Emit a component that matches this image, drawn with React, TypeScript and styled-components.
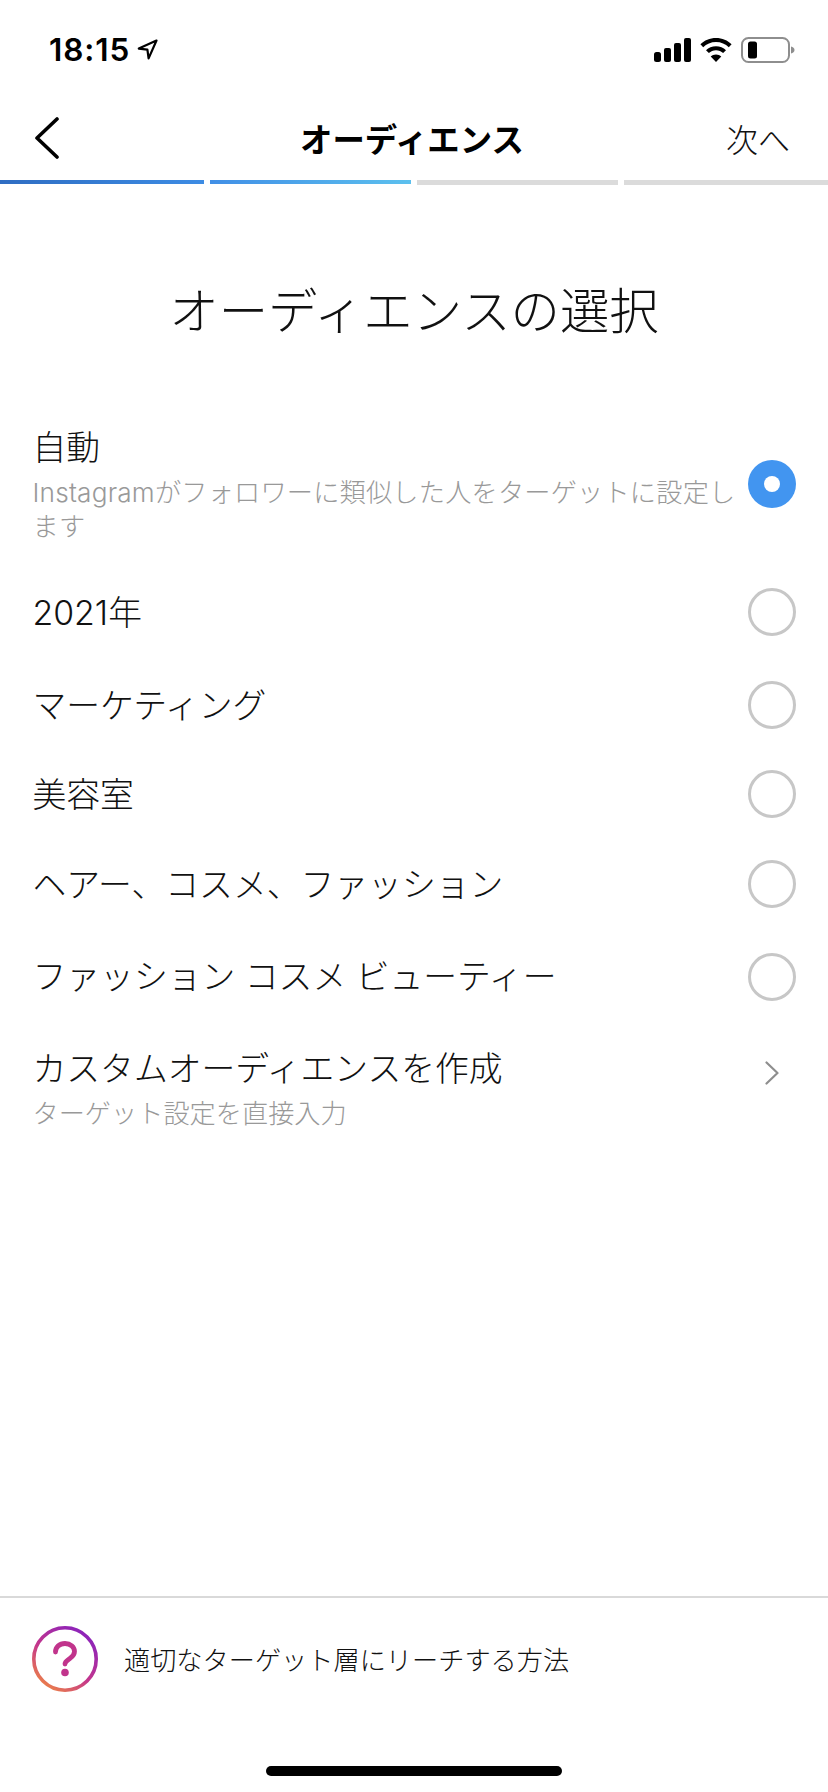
import React from "react";
import styled, { createGlobalStyle } from "styled-components";

const FONT = `"Noto Sans CJK JP", "Noto Sans", sans-serif`;
const MIXED = `Inter, "Noto Sans CJK JP", "Noto Sans", sans-serif`;

const Global = createGlobalStyle`
  html, body { margin: 0; padding: 0; background: #fff; }
  * { box-sizing: border-box; }
`;

const Page = styled.div`
  width: 828px;
  height: 1792px;
  display: flex;
  flex-direction: column;
  background: #fff;
  font-family: ${FONT};
  color: #111;
  overflow: hidden;
`;

const StatusBar = styled.div`
  height: 100px;
  padding: 32px 33px 0 49px;
  display: flex;
  justify-content: space-between;
  align-items: flex-start;
`;

const Time = styled.div`
  display: flex;
  align-items: center;
  gap: 7px;
  height: 35px;
  font-family: Inter, "Liberation Sans", sans-serif;
  font-weight: 600;
  font-size: 31.5px;
  letter-spacing: 0.9px;
  color: #000;
`;

const StatusIcons = styled.div`
  display: flex;
  align-items: center;
  gap: 9px;
  height: 35px;
`;

const Nav = styled.div`
  height: 80px;
  padding: 0 38px 4px 34px;
  display: grid;
  grid-template-columns: 1fr auto 1fr;
  align-items: center;
`;

const NavTitle = styled.div`
  font-size: 32.4px;
  font-weight: 700;
  line-height: 40px;
  color: #000;
`;

const NavNext = styled.div`
  justify-self: end;
  font-size: 32px;
  font-weight: 300;
  line-height: 40px;
  margin-bottom: 1px;
`;

const Progress = styled.div`
  display: grid;
  grid-template-columns: 204px 201px 201px 204px;
  column-gap: 6px;
  height: 5px;
`;

const Segment = styled.div<{ $from?: string; $to?: string }>`
  height: ${(p) => (p.$from ? "4px" : "5px")};
  background: ${(p) =>
    p.$from ? `linear-gradient(90deg, ${p.$from}, ${p.$to})` : "#dbdbdb"};
`;

const Title = styled.h1`
  margin: 0;
  height: 235px;
  padding-top: 93px;
  text-align: center;
  font-size: 49.4px;
  font-weight: 300;
  line-height: 60px;
  color: #111;
`;

const List = styled.div`
  display: flex;
  flex-direction: column;
  padding: 0 32px 0 33px;
`;

const Row = styled.div<{ $h: number; $after?: number }>`
  height: ${(p) => p.$h}px;
  margin-bottom: ${(p) => p.$after ?? 0}px;
  display: flex;
  align-items: center;
  justify-content: space-between;
  gap: 4px;
`;

const RowText = styled.div<{ $drop?: number }>`
  flex: 1;
  min-width: 0;
  padding-top: ${(p) => p.$drop ?? 0}px;
`;

const RowTitle = styled.div<{ $single?: boolean }>`
  font-family: ${MIXED};
  font-size: 33.8px;
  font-weight: 300;
  line-height: 46px;
  color: #111;
  padding-top: ${(p) => (p.$single ? "1px" : "0")};
  margin-left: -0.5px;
`;

const RowSub = styled.div<{ $track?: boolean }>`
  margin-top: 5px;
  font-family: ${MIXED};
  font-size: 26.2px;
  font-weight: 300;
  line-height: 34px;
  letter-spacing: ${(p) => (p.$track ? "0.2px" : "0")};
  color: #999;
  margin-left: -0.5px;
`;

const Radio = styled.div<{ $on?: boolean }>`
  flex: none;
  width: 48px;
  height: 48px;
  border-radius: 50%;
  display: flex;
  align-items: center;
  justify-content: center;
  background: ${(p) => (p.$on ? "#4295f0" : "#fff")};
  border: ${(p) => (p.$on ? "none" : "3px solid #c7c7c7")};
  &::after {
    content: "";
    display: ${(p) => (p.$on ? "block" : "none")};
    width: 16px;
    height: 16px;
    border-radius: 50%;
    background: #fff;
  }
`;

const Chevron = styled.svg`
  flex: none;
  margin: 0 17px 27px 0;
`;

const Footer = styled.div`
  margin-top: auto;
  height: 196px;
  border-top: 2px solid #d9d9d9;
  display: flex;
  flex-direction: column;
  align-items: center;
`;

const Help = styled.div`
  align-self: stretch;
  height: 124px;
  padding: 28px 0 0 32px;
  display: flex;
  align-items: flex-start;
  gap: 26px;
`;

const HelpText = styled.div`
  font-size: 26.2px;
  font-weight: 300;
  line-height: 66px;
  color: #111;
`;

const HomeBar = styled.div`
  margin-top: 44px;
  width: 296px;
  height: 10px;
  border-radius: 5px;
  background: #000;
`;

const rows = [
  { h: 92, t: "2021年" },
  { h: 94, t: "マーケティング" },
  { h: 84, t: "美容室" },
  { h: 96, t: "ヘアー、コスメ、ファッション" },
  { h: 89, t: "ファッション コスメ ビューティー" },
];

export default function App() {
  return (
    <Page>
      <Global />
      <StatusBar>
        <Time>
          18:15
          <svg width="21" height="21" viewBox="0 0 21 21" fill="none">
            <path
              d="M19.5 1.5 L1.8 9.6 L10.4 10.7 L11.6 19.4 Z"
              stroke="#000"
              strokeWidth="2.2"
              strokeLinejoin="round"
            />
          </svg>
        </Time>
        <StatusIcons>
          <svg width="37" height="24" viewBox="0 0 37 24" fill="#000">
            <rect x="0" y="14" width="7" height="10" rx="2.5" />
            <rect x="10" y="10" width="7" height="14" rx="2" />
            <rect x="20" y="5" width="7" height="19" rx="2" />
            <rect x="30" y="0" width="7" height="24" rx="2" />
          </svg>
          <svg width="32" height="24" viewBox="0 0 32 24" fill="#000">
            <path d="M16 0C9.8 0 4.3 2.4 0.4 6.3L3.2 9.2C6.5 6 11 4 16 4s9.5 2 12.8 5.2l2.8-2.9C27.7 2.4 22.2 0 16 0z" />
            <path d="M16 8.2c-3.9 0-7.5 1.5-10 4l2.9 2.9C10.7 13.3 13.2 12.2 16 12.2s5.3 1.1 7.1 2.9l2.9-2.9c-2.5-2.5-6.1-4-10-4z" />
            <path d="M16 16.4c-2.1 0-4 .8-5.3 2.2L16 24l5.3-5.4c-1.3-1.4-3.2-2.2-5.3-2.2z" />
          </svg>
          <svg width="54" height="26" viewBox="0 0 54 26" fill="none">
            <rect x="1" y="1" width="47" height="24" rx="6.5" stroke="#8e8e8e" strokeWidth="2" />
            <rect x="7" y="4.5" width="9" height="17" rx="2.5" fill="#000" />
            <path d="M50 9.5c2 .4 3.5 1.8 3.5 3.5s-1.5 3.1-3.5 3.5z" fill="#8e8e8e" />
          </svg>
        </StatusIcons>
      </StatusBar>
      <Nav>
        <svg width="26" height="42" viewBox="0 0 26 42" fill="none">
          <path
            d="M23 2 L3 21 L23 40"
            stroke="#000"
            strokeWidth="3.6"
            strokeLinecap="round"
            strokeLinejoin="round"
          />
        </svg>
        <NavTitle>オーディエンス</NavTitle>
        <NavNext>次へ</NavNext>
      </Nav>
      <Progress>
        <Segment $from="#2f6dc2" $to="#3d8ce4" />
        <Segment $from="#418fe6" $to="#5cc0ee" />
        <Segment />
        <Segment />
      </Progress>
      <Title>オーディエンスの選択</Title>
      <List>
        <Row $h={128} $after={18}>
          <RowText>
            <RowTitle>自動</RowTitle>
            <RowSub $track>Instagramがフォロワーに類似した人をターゲットに設定します</RowSub>
          </RowText>
          <Radio $on />
        </Row>
        {rows.map((r) => (
          <Row key={r.t} $h={r.h}>
            <RowTitle $single>{r.t}</RowTitle>
            <Radio />
          </Row>
        ))}
        <Row $h={131}>
          <RowText $drop={4}>
            <RowTitle>カスタムオーディエンスを作成</RowTitle>
            <RowSub>ターゲット設定を直接入力</RowSub>
          </RowText>
          <Chevron width="14" height="24" viewBox="0 0 14 24" fill="none">
            <path d="M1.5 1.5 L12.5 12 L1.5 22.5" stroke="#8e8e8e" strokeWidth="2.2" strokeLinecap="round" strokeLinejoin="round" />
          </Chevron>
        </Row>
      </List>
      <Footer>
        <Help>
          <svg width="66" height="66" viewBox="0 0 66 66" fill="none">
            <defs>
              <linearGradient id="ring" x1="0.8" y1="0.1" x2="0.2" y2="0.95">
                <stop offset="0" stopColor="#8f24b8" />
                <stop offset="0.55" stopColor="#c4368c" />
                <stop offset="1" stopColor="#ea7d4c" />
              </linearGradient>
            </defs>
            <circle cx="33" cy="33" r="31.2" stroke="url(#ring)" strokeWidth="3.6" />
            <path
              d="M23.5 26c0-5 4-8.5 9.5-8.5s9.5 3.5 9.5 8c0 4-2.5 5.5-5 7.2-2.5 1.7-4.5 2.8-4.5 5.3"
              stroke="#c1348c"
              strokeWidth="4.8"
              strokeLinecap="round"
            />
            <circle cx="33" cy="46.5" r="3.8" fill="#c1348c" />
          </svg>
          <HelpText>適切なターゲット層にリーチする方法</HelpText>
        </Help>
        <HomeBar />
      </Footer>
    </Page>
  );
}
